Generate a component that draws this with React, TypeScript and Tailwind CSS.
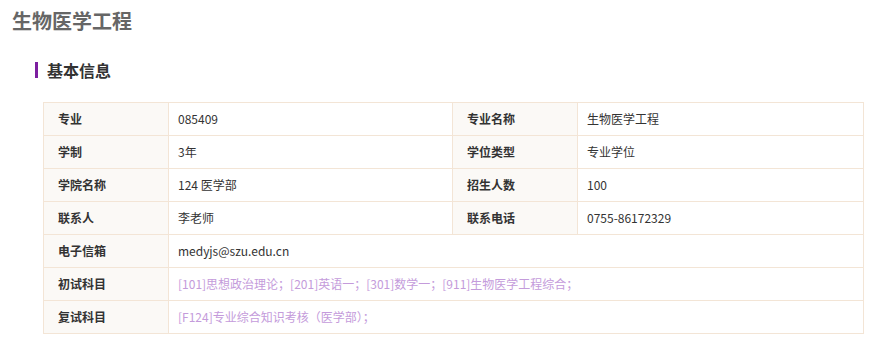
import React from "react";

const font = { fontFamily: '"Noto Sans CJK SC", "Noto Sans", sans-serif' };

const th = "border border-[#f3e5d6] bg-[#fbf9f6] text-left pl-[14px] pr-2 font-bold text-[12px] text-[#333] h-[33px] p-0 align-middle";
const td = "border border-[#f3e5d6] bg-white text-left pl-[9px] pr-2 text-[12px] text-[#333] h-[33px] p-0 align-middle";

export default function App() {
  return (
    <div className="w-[883px] h-[352px] bg-white overflow-hidden" style={font}>
      <h1 className="pl-[12px] pt-[6px] text-[20px] leading-[30px] font-bold text-[#666]">生物医学工程</h1>
      <div className="flex items-center pl-[35px] mt-[24px] h-[20px]">
        <span className="w-[3px] h-[16px] bg-[#7d1fa0]" />
        <span className="ml-[9px] text-[16px] font-bold text-[#333] leading-[20px]">基本信息</span>
      </div>
      <div className="pl-[43px] mt-[22px]">
        <table className="w-[820px] border-collapse table-fixed">
          <colgroup>
            <col className="w-[125px]" />
            <col className="w-[284px]" />
            <col className="w-[125px]" />
            <col className="w-[286px]" />
          </colgroup>
          <tbody>
            <tr>
              <th className={th}>专业</th>
              <td className={td}>085409</td>
              <th className={th}>专业名称</th>
              <td className={td}>生物医学工程</td>
            </tr>
            <tr>
              <th className={th}>学制</th>
              <td className={td}>3年</td>
              <th className={th}>学位类型</th>
              <td className={td}>专业学位</td>
            </tr>
            <tr>
              <th className={th}>学院名称</th>
              <td className={td}>124 医学部</td>
              <th className={th}>招生人数</th>
              <td className={td}>100</td>
            </tr>
            <tr>
              <th className={th}>联系人</th>
              <td className={td}>李老师</td>
              <th className={th}>联系电话</th>
              <td className={td}>0755-86172329</td>
            </tr>
            <tr>
              <th className={th}>电子信箱</th>
              <td className={td} colSpan={3}>medyjs@szu.edu.cn</td>
            </tr>
            <tr>
              <th className={th}>初试科目</th>
              <td className={td + " !text-[#c49bdb]"} colSpan={3}>[101]思想政治理论；[201]英语一；[301]数学一；[911]生物医学工程综合；</td>
            </tr>
            <tr>
              <th className={th}>复试科目</th>
              <td className={td + " !text-[#c49bdb]"} colSpan={3}>[F124]专业综合知识考核（医学部）；</td>
            </tr>
          </tbody>
        </table>
      </div>
    </div>
  );
}
